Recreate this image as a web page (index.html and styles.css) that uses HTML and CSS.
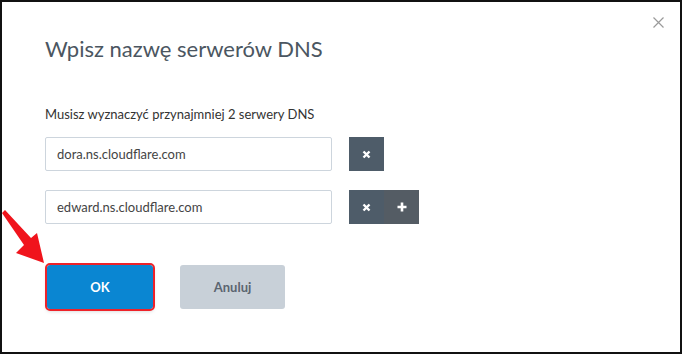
FILE: index.html
```html
<!DOCTYPE html>
<html>
<head>
<meta charset="utf-8">
<link rel="stylesheet" href="styles.css">
</head>
<body>
<div class="frame">
	<span class="close">
		<svg width="11" height="11" viewBox="0 0 11 11"><path d="M0.5 0.5L10.5 10.5M10.5 0.5L0.5 10.5" stroke="#9a9a9a" stroke-width="1.2" fill="none"/></svg>
	</span>
	<div class="dialog">
		<h1 class="title">Wpisz nazwę serwerów DNS</h1>
		<p class="hint">Musisz wyznaczyć przynajmniej 2 serwery DNS</p>
		<div class="row">
			<input class="field" type="text" value="dora.ns.cloudflare.com">
			<div class="tools">
				<span class="tool remove"><svg width="9" height="9" viewBox="0 0 9 9"><path d="M1.5 1.5L7.5 7.5M7.5 1.5L1.5 7.5" stroke="#fff" stroke-width="2.4" fill="none"/></svg></span>
			</div>
		</div>
		<div class="row">
			<input class="field" type="text" value="edward.ns.cloudflare.com">
			<div class="tools">
				<span class="tool remove"><svg width="9" height="9" viewBox="0 0 9 9"><path d="M1.5 1.5L7.5 7.5M7.5 1.5L1.5 7.5" stroke="#fff" stroke-width="2.4" fill="none"/></svg></span>
				<span class="tool add"><svg width="10" height="10" viewBox="0 0 10 10"><path d="M5 0.5V9.5M0.5 5H9.5" stroke="#fff" stroke-width="2.6" fill="none"/></svg></span>
			</div>
		</div>
		<div class="actions">
			<button class="btn ok">OK</button>
			<button class="btn cancel">Anuluj</button>
		</div>
	</div>
	<svg class="arrow" width="50" height="70" viewBox="0 200 50 70">
		<polygon points="2,213 5,210 31,238 37,233 44,263 16,253 24,245" fill="#f0141c"/>
	</svg>
</div>
</body>
</html>
```

FILE: styles.css
```css
body
{
	margin: 0;
	background-color: #fff;
	font-family: Lato, "Open Sans", sans-serif;
}
.frame
{
	position: relative;
	width: 682px;
	height: 354px;
	box-sizing: border-box;
	border: 2px solid #111;
	background-color: #fff;
	overflow: hidden;
}
.close
{
	position: absolute;
	top: 15px;
	right: 16px;
	display: flex;
}
.dialog
{
	padding: 32px 0 0 43px;
}
.title
{
	margin: 0;
	font-size: 22px;
	line-height: 30px;
	font-weight: 400;
	color: #4b5661;
}
.hint
{
	margin: 41px 0 0;
	font-size: 13px;
	line-height: 18px;
	color: #333;
}
.row
{
	display: flex;
	gap: 17px;
	margin-top: 14px;
}
.row + .row
{
	margin-top: 19px;
}
.field
{
	width: 287px;
	height: 34px;
	box-sizing: border-box;
	border: 1px solid #cdd5dd;
	border-radius: 2px;
	padding: 0 11px;
	font-family: Lato, "Open Sans", sans-serif;
	font-size: 13px;
	color: #444;
	outline: none;
}
.tools
{
	display: flex;
}
.tool
{
	width: 35px;
	height: 34px;
	display: flex;
	align-items: center;
	justify-content: center;
}
.remove
{
	background-color: #4e5c69;
}
.add
{
	background-color: #545c64;
}
.actions
{
	display: flex;
	gap: 27px;
	margin-top: 41px;
	padding-left: 2px;
}
.btn
{
	width: 106px;
	height: 44px;
	border: 0;
	border-radius: 3px;
	font-family: Lato, "Open Sans", sans-serif;
	font-size: 13px;
	font-weight: 700;
}
.ok
{
	background-color: #0a86d2;
	color: #fff;
	outline: 2px solid #ee2229;
	box-shadow: 0 2px 4px rgba(0, 0, 0, 0.2);
}
.cancel
{
	width: 105px;
	background-color: #c8d0d8;
	color: #5b6570;
}
.arrow
{
	position: absolute;
	left: -2px;
	top: 198px;
}
```
